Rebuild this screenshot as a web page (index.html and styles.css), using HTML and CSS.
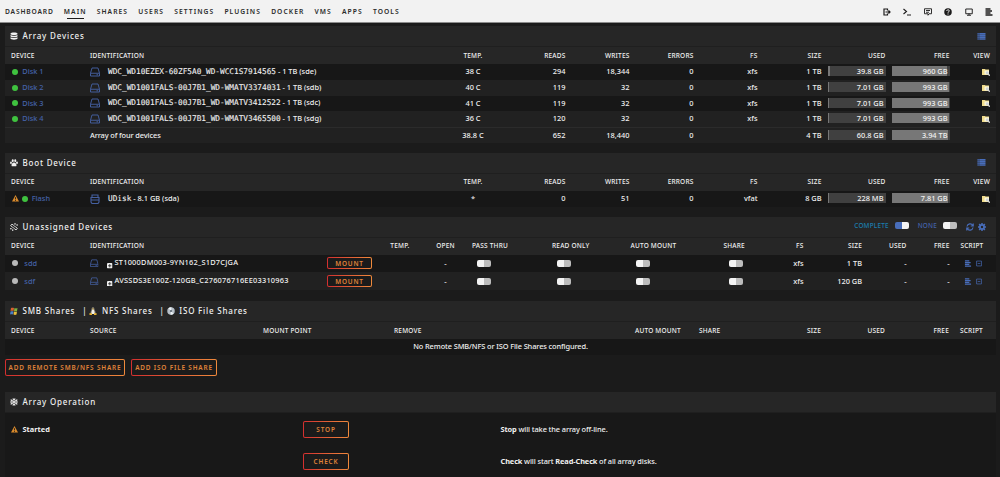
FILE: index.html
```
<!DOCTYPE html>
<html lang="en">
<head>
    <meta charset="UTF-8">
    <meta name="viewport" content="width=device-width, initial-scale=1.0">
    <title>Tower/Main</title>
    <link rel="stylesheet" href="styles.css">
</head>
<body>

<svg class="defs">
    <symbol id="i-logout" viewBox="0 0 16 16"><path d="M9 5V2H2v12h7v-3M5 8h9M11 5l3 3-3 3" fill="none" stroke="currentColor" stroke-width="2.4"/></symbol>
    <symbol id="i-term" viewBox="0 0 16 16"><path d="M1 2l6 5-6 5M8 14h8" fill="none" stroke="currentColor" stroke-width="2.2"/></symbol>
    <symbol id="i-chat" viewBox="0 0 16 16"><path d="M1 1.5h14v10H10l-2 3v-3H1zM4 5h8M4 8.5h6" fill="none" stroke="currentColor" stroke-width="1.8"/></symbol>
    <symbol id="i-help" viewBox="0 0 16 16"><circle cx="8" cy="8" r="7.5" fill="currentColor"/><path d="M5.5 6c0-3.5 5.5-3 5 0C10.5 7.5 8 7.5 8 9.5M8 11v2" fill="none" stroke="#f2f2f2" stroke-width="2"/></symbol>
    <symbol id="i-screen" viewBox="0 0 16 16"><path d="M1.5 2h13v9.5h-13zM4 14.5h8M8 11v3" fill="none" stroke="currentColor" stroke-width="1.9"/></symbol>
    <symbol id="i-log" viewBox="0 0 16 16"><path d="M1 2h10M1 6h13M1 10h10M1 14h14" fill="none" stroke="currentColor" stroke-width="2.6"/></symbol>
    <symbol id="i-db" viewBox="0 0 16 16"><path d="M1 3c0-3 14-3 14 0v1c0 2.5-14 2.5-14 0zM1 6c2 2 12 2 14 0v2.5c0 2.5-14 2.5-14 0zM1 10.5c2 2 12 2 14 0V13c0 3-14 3-14 0z" fill="currentColor"/></symbol>
    <symbol id="i-paw" viewBox="0 0 16 16"><g fill="currentColor"><ellipse cx="5.5" cy="3.5" rx="2" ry="2.8"/><ellipse cx="10.5" cy="3.5" rx="2" ry="2.8"/><ellipse cx="2" cy="7.5" rx="1.8" ry="2.4"/><ellipse cx="14" cy="7.5" rx="1.8" ry="2.4"/><path d="M8 7c3 0 5 3 5 5.5 0 3-3 2-5 2s-5 1-5-2C3 10 5 7 8 7z"/></g></symbol>
    <symbol id="i-unlink" viewBox="0 0 16 16"><path d="M7 5L4.5 2 1.5 5l3 3M9 11l2.5 3 3-3-3-3M5 8l3 3M8 5l3 3M10 0v3.5M12.5 4H16M0 11.5h3.5M5.5 12.5V16" fill="none" stroke="currentColor" stroke-width="2"/></symbol>
    <symbol id="i-snow" viewBox="0 0 16 16"><path d="M8 0v16M1 4l14 8M15 4L1 12M5.5 1.5L8 4l2.5-2.5M5.5 14.5L8 12l2.5 2.5M1 7l3.5-1L3.5 2.5M15 7l-3.5-1 1-3.5M1 9l3.5 1-1 3.5M15 9l-3.5 1 1 3.5" fill="none" stroke="currentColor" stroke-width="1.8"/></symbol>
    <symbol id="i-list" viewBox="0 0 16 14"><path d="M0 1.5h2.5M3.5 1.5h12.5M0 5h2.5M3.5 5h12.5M0 8.5h2.5M3.5 8.5h12.5M0 12h2.5M3.5 12h12.5" stroke="currentColor" stroke-width="2.8"/></symbol>
    <symbol id="i-disk" viewBox="0 0 20 20"><path d="M1 12.5L4 2h12l3 10.5V18H1zM1 12.5h18M13 15.5h3" fill="none" stroke="currentColor" stroke-width="1.9"/></symbol>
    <symbol id="i-usb" viewBox="0 0 20 20"><path d="M4 7V2h12v5M2 7h16v5H2zM2 12h16v4l-2 3H4l-2-3z" fill="none" stroke="currentColor" stroke-width="2.2"/></symbol>
    <symbol id="i-warn" viewBox="0 0 16 16"><path d="M8 0l8 15H0z" fill="#d98a2b"/><path d="M8 5v5M8 11.5v2" stroke="#1b1b1b" stroke-width="2"/></symbol>
    <symbol id="i-view" viewBox="0 0 16 14"><path d="M0 0h6l1 1h7v11H0z" fill="#f0dc8c"/><path d="M5 3h9v8H5z" fill="#fbf6dc"/><path d="M12 9.5l3.5 4" stroke="#d8d8d8" stroke-width="2.5"/><circle cx="10.5" cy="7.5" r="3" fill="#cfd4d8"/></symbol>
    <symbol id="i-refresh" viewBox="0 0 16 16"><path d="M2 7c1-6 9-7 11.5-2M14.5 1v5h-5M14 9c-1 6-9 7-11.5 2M1.5 15v-5h5" fill="none" stroke="currentColor" stroke-width="2.3"/></symbol>
    <symbol id="i-gear" viewBox="0 0 16 16"><circle cx="8" cy="8" r="4.2" fill="none" stroke="currentColor" stroke-width="3.6"/><path d="M8 0v3M8 13v3M0 8h3M13 8h3M2.3 2.3l2 2M11.7 11.7l2 2M13.7 2.3l-2 2M4.3 11.7l-2 2" stroke="currentColor" stroke-width="3"/></symbol>
    <symbol id="i-box" viewBox="0 0 16 16"><path d="M1.5 1.5h13v13h-13zM4.5 8h7" fill="none" stroke="currentColor" stroke-width="1.8"/></symbol>
    <symbol id="i-plus" viewBox="0 0 12 12"><rect width="12" height="12" rx="2" fill="#eee"/><path d="M6 2.5v7M2.5 6h7" stroke="#333" stroke-width="2"/></symbol>
    <symbol id="i-win" viewBox="0 0 16 16"><path d="M2 2c2-1 4-1 6 0L7 8C5 7 3 7 1 8z" fill="#d8612f"/><path d="M9 2c2 1 4 1 6 0l-1 6c-2 1-4 1-6 0z" fill="#82b440"/><path d="M1 9c2-1 4-1 6 0l-1 6c-2-1-4-1-6 0z" fill="#4b7fc4"/><path d="M8 9c2 1 4 1 6 0l-1 6c-2 1-4 1-6 0z" fill="#e6bd3c"/></symbol>
    <symbol id="i-tux" viewBox="0 0 16 16"><path d="M8 0c3 0 2.5 4 4 7s2 5 1 7H3c-1-2 0-4 1-7s1-7 4-7z" fill="#77736a"/><path d="M8 4c2 1 4 6 3 10H5C4 10 6 5 8 4z" fill="#f4f1e6"/><path d="M1 12l5 1v3H1zM15 12l-5 1v3h5zM6.5 3h3L8 6z" fill="#e9b52e"/></symbol>
    <symbol id="i-cd" viewBox="0 0 16 16"><circle cx="8" cy="8" r="7.5" fill="#b7c0c8"/><path d="M8 8L3 2.5A7.5 7.5 0 0 1 9 .6zM8 8l5 5.5A7.5 7.5 0 0 1 7 15.4z" fill="#edf3f7"/><circle cx="8" cy="8" r="2" fill="#56626c"/></symbol>
</svg>

<div class="header">
    <div class="nav">
        <a href="#">Dashboard</a>
        <a href="#" class="active">Main</a>
        <a href="#">Shares</a>
        <a href="#">Users</a>
        <a href="#">Settings</a>
        <a href="#">Plugins</a>
        <a href="#">Docker</a>
        <a href="#">VMs</a>
        <a href="#">Apps</a>
        <a href="#">Tools</a>
    </div>
    <div class="tools">
        <svg><use href="#i-logout"/></svg>
        <svg><use href="#i-term"/></svg>
        <svg><use href="#i-chat"/></svg>
        <svg><use href="#i-help"/></svg>
        <svg><use href="#i-screen"/></svg>
        <svg><use href="#i-log"/></svg>
    </div>
</div>

<div class="content">
    <div class="section array">
        <div class="title"><svg class="ico"><use href="#i-db"/></svg>Array Devices<div class="right"><svg class="list"><use href="#i-list"/></svg></div></div>
        <table class="disks">
            <colgroup><col class="c-dev"><col class="c-id"><col class="c-num"><col class="c-reads"><col class="c-num"><col class="c-num"><col class="c-num"><col class="c-num"><col class="c-num"><col class="c-num"><col></colgroup>
            <thead>
                <tr><th class="first">Device</th><th>Identification</th><th class="mid">Temp.</th><th class="num">Reads</th><th class="num">Writes</th><th class="num">Errors</th><th class="num">FS</th><th class="num">Size</th><th class="num">Used</th><th class="num">Free</th><th class="last">View</th></tr>
            </thead>
            <tbody>
                <tr><td class="first"><i class="orb green"></i><a href="#">Disk 1</a></td><td><svg class="disk"><use href="#i-disk"/></svg><span class="mono">WDC_WD10EZEX-60ZF5A0_WD-WCC1S7914565</span> - 1 TB (sde)</td><td class="mid">38 C</td><td class="num">294</td><td class="num">18,344</td><td class="num">0</td><td class="num">xfs</td><td class="num">1 TB</td><td><div class="bar used"><span style="width:4%"></span>39.8 GB</div></td><td><div class="bar free"><span style="width:96%"></span>960 GB</div></td><td class="last"><svg class="view"><use href="#i-view"/></svg></td></tr>
                <tr><td class="first"><i class="orb green"></i><a href="#">Disk 2</a></td><td><svg class="disk"><use href="#i-disk"/></svg><span class="mono">WDC_WD1001FALS-00J7B1_WD-WMATV3374031</span> - 1 TB (sdb)</td><td class="mid">40 C</td><td class="num">119</td><td class="num">32</td><td class="num">0</td><td class="num">xfs</td><td class="num">1 TB</td><td><div class="bar used"><span style="width:1%"></span>7.01 GB</div></td><td><div class="bar free"><span style="width:99%"></span>993 GB</div></td><td class="last"><svg class="view"><use href="#i-view"/></svg></td></tr>
                <tr><td class="first"><i class="orb green"></i><a href="#">Disk 3</a></td><td><svg class="disk"><use href="#i-disk"/></svg><span class="mono">WDC_WD1001FALS-00J7B1_WD-WMATV3412522</span> - 1 TB (sdc)</td><td class="mid">41 C</td><td class="num">119</td><td class="num">32</td><td class="num">0</td><td class="num">xfs</td><td class="num">1 TB</td><td><div class="bar used"><span style="width:1%"></span>7.01 GB</div></td><td><div class="bar free"><span style="width:99%"></span>993 GB</div></td><td class="last"><svg class="view"><use href="#i-view"/></svg></td></tr>
                <tr><td class="first"><i class="orb green"></i><a href="#">Disk 4</a></td><td><svg class="disk"><use href="#i-disk"/></svg><span class="mono">WDC_WD1001FALS-00J7B1_WD-WMATV3465500</span> - 1 TB (sdg)</td><td class="mid">36 C</td><td class="num">120</td><td class="num">32</td><td class="num">0</td><td class="num">xfs</td><td class="num">1 TB</td><td><div class="bar used"><span style="width:1%"></span>7.01 GB</div></td><td><div class="bar free"><span style="width:99%"></span>993 GB</div></td><td class="last"><svg class="view"><use href="#i-view"/></svg></td></tr>
                <tr class="total"><td></td><td class="text">Array of four devices</td><td class="mid">38.8 C</td><td class="num">652</td><td class="num">18,440</td><td class="num">0</td><td></td><td class="num">4 TB</td><td><div class="bar used"><span style="width:2%"></span>60.8 GB</div></td><td><div class="bar free"><span style="width:98%"></span>3.94 TB</div></td><td></td></tr>
            </tbody>
        </table>
    </div>

    <div class="section boot">
        <div class="title"><svg class="ico"><use href="#i-paw"/></svg>Boot Device<div class="right"><svg class="list"><use href="#i-list"/></svg></div></div>
        <table class="disks">
            <colgroup><col class="c-dev"><col class="c-id"><col class="c-num"><col class="c-reads"><col class="c-num"><col class="c-num"><col class="c-num"><col class="c-num"><col class="c-num"><col class="c-num"><col></colgroup>
            <thead>
                <tr><th class="first">Device</th><th>Identification</th><th class="mid">Temp.</th><th class="num">Reads</th><th class="num">Writes</th><th class="num">Errors</th><th class="num">FS</th><th class="num">Size</th><th class="num">Used</th><th class="num">Free</th><th class="last">View</th></tr>
            </thead>
            <tbody>
                <tr><td class="first"><svg class="warn"><use href="#i-warn"/></svg><i class="orb green"></i><a href="#">Flash</a></td><td><svg class="disk"><use href="#i-usb"/></svg><span class="mono">UDisk</span> - 8.1 GB (sda)</td><td class="mid">*</td><td class="num">0</td><td class="num">51</td><td class="num">0</td><td class="num">vfat</td><td class="num">8 GB</td><td><div class="bar used"><span style="width:3%"></span>228 MB</div></td><td><div class="bar free"><span style="width:97%"></span>7.81 GB</div></td><td class="last"><svg class="view"><use href="#i-view"/></svg></td></tr>
            </tbody>
        </table>
    </div>

    <div class="section unassigned">
        <div class="title"><svg class="ico"><use href="#i-unlink"/></svg>Unassigned Devices
            <div class="right">
                <span class="opt on">Complete</span><i class="switch on"></i>
                <span class="opt">None</span><i class="switch"></i>
                <svg class="act refresh"><use href="#i-refresh"/></svg><svg class="act"><use href="#i-gear"/></svg>
            </div>
        </div>
        <table class="ua">
            <colgroup><col class="c-dev"><col class="u-id"><col class="u-mount"><col class="u-temp"><col class="u-open"><col class="u-pass"><col class="u-read"><col class="u-auto"><col class="u-share"><col class="u-fs"><col class="u-size"><col class="u-used"><col class="u-free"><col></colgroup>
            <thead>
                <tr><th class="first">Device</th><th>Identification</th><th></th><th class="num">Temp.</th><th class="open">Open</th><th>Pass Thru</th><th>Read Only</th><th>Auto Mount</th><th>Share</th><th class="num">FS</th><th class="num">Size</th><th class="num">Used</th><th class="num">Free</th><th class="script">Script</th></tr>
            </thead>
            <tbody>
                <tr><td class="first"><i class="orb grey"></i><a href="#">sdd</a></td><td class="serial"><svg class="hdd"><use href="#i-disk"/></svg><svg class="plus"><use href="#i-plus"/></svg>ST1000DM003-9YN162_S1D7CJGA</td><td><button class="mount">Mount</button></td><td></td><td class="open">-</td><td class="flag"><i class="switch"></i></td><td class="flag"><i class="switch"></i></td><td class="flag"><i class="switch"></i></td><td class="flag"><i class="switch"></i></td><td class="num">xfs</td><td class="num">1 TB</td><td class="num">-</td><td class="num">-</td><td class="script"><svg><use href="#i-log"/></svg><svg class="box"><use href="#i-box"/></svg></td></tr>
                <tr><td class="first"><i class="orb grey"></i><a href="#">sdf</a></td><td class="serial"><svg class="hdd"><use href="#i-disk"/></svg><svg class="plus"><use href="#i-plus"/></svg>AVSSDS3E100Z-120GB_C276076716EE03310963</td><td><button class="mount">Mount</button></td><td></td><td class="open">-</td><td class="flag"><i class="switch"></i></td><td class="flag"><i class="switch"></i></td><td class="flag"><i class="switch"></i></td><td class="flag"><i class="switch"></i></td><td class="num">xfs</td><td class="num">120 GB</td><td class="num">-</td><td class="num">-</td><td class="script"><svg><use href="#i-log"/></svg><svg class="box"><use href="#i-box"/></svg></td></tr>
            </tbody>
        </table>
    </div>

    <div class="section shares">
        <div class="title"><svg class="ico"><use href="#i-win"/></svg>SMB Shares<b>|</b><svg class="ico"><use href="#i-tux"/></svg>NFS Shares<b>|</b><svg class="ico"><use href="#i-cd"/></svg>ISO File Shares</div>
        <table>
            <colgroup><col class="c-dev"><col class="s-source"><col class="s-mount"><col class="s-remove"><col class="s-auto"><col class="s-share"><col class="s-size"><col class="c-num"><col class="c-num"><col></colgroup>
            <thead>
                <tr><th class="first">Device</th><th>Source</th><th>Mount Point</th><th>Remove</th><th>Auto Mount</th><th>Share</th><th class="num">Size</th><th class="num">Used</th><th class="num">Free</th><th class="script">Script</th></tr>
            </thead>
            <tbody>
                <tr><td class="mid text" colspan="10">No Remote SMB/NFS or ISO File Shares configured.</td></tr>
            </tbody>
        </table>
        <div class="buttons"><button>Add Remote SMB/NFS Share</button><button>Add ISO File Share</button></div>
    </div>

    <div class="section operation">
        <div class="title"><svg class="ico"><use href="#i-snow"/></svg>Array Operation</div>
        <div class="row">
            <div class="state"><svg class="warn"><use href="#i-warn"/></svg><strong>Started</strong></div>
            <div class="cmd"><button>Stop</button></div>
            <p class="text"><strong>Stop</strong> will take the array off-line.</p>
        </div>
        <div class="row">
            <div class="state"></div>
            <div class="cmd"><button>Check</button></div>
            <p class="text"><strong>Check</strong> will start <strong>Read-Check</strong> of all array disks.</p>
        </div>
    </div>
</div>

</body>
</html>
```
FILE: styles.css
```
* {
    margin: 0;
    padding: 0;
    box-sizing: border-box;
}

html, body {
    height: 477px;
    overflow: hidden;
}

body {
    background: #1b1b1b;
    color: #f0f0f0;
    font: 500 7.4px/10px "Noto Sans", sans-serif;
}

a {
    color: #4462a8;
    text-decoration: none;
}

.defs {
    display: none;
}

.header {
    display: flex;
    justify-content: space-between;
    height: 23px;
    padding: 6px 7px 0 5px;
    background: #f2f2f2;
    border-bottom: 1px solid #8c8c8c;
    color: #1c1b1b;
}

.nav {
    display: flex;
    gap: 10.2px;
}

.nav a {
    height: 13px;
    color: #2a2a2a;
    font-size: 6.7px;
    font-weight: 600;
    letter-spacing: 1.07px;
    line-height: 11px;
    text-transform: uppercase;
}

.nav a:first-child {
    letter-spacing: .82px;
}

.nav .active {
    background: linear-gradient(#1c1b1b, #1c1b1b) center bottom / 17px 1px no-repeat;
}

.tools {
    display: flex;
    gap: 12.5px;
    padding-top: 2px;
}

.tools svg {
    width: 8px;
    height: 8px;
}

.content {
    padding: 3px 4px 0 5px;
}

.title {
    display: flex;
    align-items: center;
    height: 21px;
    padding-left: 5px;
    background: #262626;
    border-bottom: 1px solid #1f1f1f;
    font-size: 8px;
    letter-spacing: .8px;
}

.title .ico {
    width: 8px;
    height: 8px;
    margin-right: 4.5px;
}

.title b {
    margin: 0 2px 0 7px;
    font-weight: 500;
}

.title .right {
    display: flex;
    align-items: center;
    margin-left: auto;
    padding-right: 10px;
    color: #486dba;
}

.list {
    width: 9px;
    height: 7px;
}

table {
    width: 991px;
    border-collapse: collapse;
    table-layout: fixed;
}

th {
    height: 17px;
    background: #262626;
    font-size: 6.5px;
    font-weight: 500;
    letter-spacing: .2px;
    text-align: left;
    text-transform: uppercase;
    white-space: nowrap;
}

td {
    height: 15.75px;
    padding-bottom: 1px;
    white-space: nowrap;
}

tbody tr:nth-child(odd) {
    background: #171717;
}

tbody tr:nth-child(even), tbody .total:nth-child(odd) {
    background: #212121;
}

.total td {
    border-top: 1px solid #2b2b2b;
}

.first { padding-left: 6px; }
.mid { text-align: center; }
.num { text-align: right; }
.last { padding-right: 6px; text-align: right; }
.text { letter-spacing: -.11px; }
.serial { letter-spacing: .23px; }
.flag { padding-left: 5px; }
.open { padding-left: 9.5px; text-align: center; }

.c-dev { width: 85px; }
.c-id { width: 351px; }
.c-num { width: 64px; }
.c-reads { width: 60.5px; }

.u-id { width: 237px; }
.u-mount { width: 46px; }
.u-temp { width: 36.5px; }
.u-open { width: 62.5px; }
.u-pass { width: 80px; }
.u-read { width: 78.5px; }
.u-auto { width: 93px; }
.u-share { width: 46.5px; }
.u-fs { width: 33.5px; }
.u-size { width: 58.5px; }
.u-used { width: 44.5px; }
.u-free { width: 43px; }

.orb {
    display: inline-block;
    width: 6px;
    height: 6px;
    margin: 0 4px 0 1.3px;
    border-radius: 50%;
    vertical-align: -.5px;
}

.green { background: #3fc23f; }
.grey { background: #b9b9b9; margin-right: 6px; }

.disk, .hdd {
    width: 10px;
    height: 10px;
    margin-right: 8px;
    color: #4560a0;
    vertical-align: middle;
}

.hdd {
    width: 8.5px;
    height: 8.5px;
    margin-right: 8.5px;
}

.mono {
    font-family: "DejaVu Sans Mono", monospace;
    font-size: 7.75px;
    -webkit-text-stroke: .1px #f0f0f0;
}

.plus {
    width: 5.5px;
    height: 5.5px;
    margin-right: 2px;
    vertical-align: -3.5px;
}

.bar {
    position: relative;
    z-index: 0;
    height: 10px;
    margin-left: 6px;
    padding-right: 2px;
    background: #404040;
    line-height: 10px;
    text-align: right;
}

/* fill lies behind the figure */
.bar span {
    position: absolute;
    z-index: -1;
    top: 0;
    bottom: 0;
    left: 0;
    background: #777;
}

.view {
    width: 8px;
    height: 7px;
    vertical-align: middle;
}

.warn {
    width: 7px;
    height: 7px;
    margin-left: 1px;
    vertical-align: -1px;
}

.boot {
    margin-top: 10px;
}

.boot .orb {
    margin-left: 2.7px;
}

.unassigned {
    margin-top: 10px;
}

.unassigned td {
    height: 17.75px;
}

.switch {
    display: inline-block;
    width: 14px;
    height: 7px;
    border-radius: 2px;
    background: linear-gradient(90deg, #f4f4f4 50%, #bdbdbd 50%);
    vertical-align: middle;
}

.switch.on {
    background: linear-gradient(90deg, #486dba 50%, #f4f4f4 50%);
}

.title .right .switch {
    margin-bottom: 2px;
}

.opt {
    margin: 0 6px 2px 9px;
    color: #4462a8;
    font-size: 6.4px;
    letter-spacing: .2px;
    text-transform: uppercase;
}

.opt.on {
    color: #1b7eae;
}

.act {
    width: 8px;
    height: 8px;
    margin: 1px 0 0 4px;
}

.refresh {
    margin-left: 9px;
}

.script {
    padding-left: 11px;
    color: #486dba;
}

th.script {
    color: #f0f0f0;
}

.script svg {
    width: 8px;
    height: 7px;
    margin: 0 4px 0 3px;
    vertical-align: middle;
}

.script .box {
    width: 6px;
    margin: 0;
}

button {
    height: 17px;
    padding-top: 1px;
    border: 1px solid transparent;
    border-radius: 2px;
    background: linear-gradient(#1b1b1b, #1b1b1b) padding-box, linear-gradient(90deg, #d32f2f, #f08a3c) border-box;
    color: #e0843a;
    font: 600 6.4px/10px "Noto Sans", sans-serif;
    letter-spacing: .83px;
    text-transform: uppercase;
    white-space: nowrap;
}

.mount {
    display: block;
    width: 45px;
    height: 12px;
}

.shares {
    margin-top: 11px;
}

.s-source { width: 173px; }
.s-mount { width: 131px; }
.s-remove { width: 241px; }
.s-auto { width: 64px; }
.s-share { width: 58px; }
.s-size { width: 64px; }

.buttons {
    display: flex;
    gap: 6px;
    padding-top: 4px;
}

.buttons button {
    width: 120px;
}

.buttons button + button {
    width: 86px;
}

.operation {
    height: 100px;
    margin-top: 16px;
    background: #181818;
}

.row {
    display: flex;
    align-items: center;
    height: 32px;
    padding: 1px 0 0 5px;
}

.state {
    width: 293px;
}

.state strong {
    margin-left: 4.5px;
}

.cmd {
    width: 197.5px;
}

.cmd button {
    width: 46px;
}
```
